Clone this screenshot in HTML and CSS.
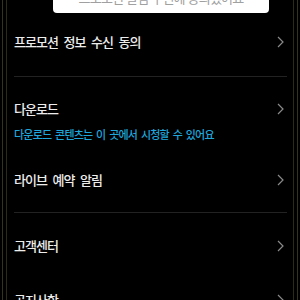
FILE: index.html
```html
<!DOCTYPE html>
<html lang="ko">
<head>
<meta charset="utf-8">
<link rel="stylesheet" href="styles.css">
</head>
<body>
<div class="frame">
  <div class="inner">
    <div class="content">
      <div class="toast"><span class="toast-text">프로모션 알림 수신에 동의했어요</span></div>

      <div class="row first">
        <span class="label">프로모션 정보 수신 동의</span>
        <svg class="chev" width="7" height="12" viewBox="0 0 7 12"><polyline points="1,1 6,6 1,11" fill="none" stroke="#8a8a8a" stroke-width="1.2"/></svg>
      </div>

      <div class="divider d1"></div>

      <div class="download">
        <div class="dl-title">
          <span class="label">다운로드</span>
          <svg class="chev" width="7" height="12" viewBox="0 0 7 12"><polyline points="1,1 6,6 1,11" fill="none" stroke="#8a8a8a" stroke-width="1.2"/></svg>
        </div>
        <div class="sub">다운로드 콘텐츠는 이 곳에서 시청할 수 있어요</div>
      </div>

      <div class="row">
        <span class="label">라이브 예약 알림</span>
        <svg class="chev" width="7" height="12" viewBox="0 0 7 12"><polyline points="1,1 6,6 1,11" fill="none" stroke="#8a8a8a" stroke-width="1.2"/></svg>
      </div>

      <div class="divider d2"></div>

      <div class="row">
        <span class="label">고객센터</span>
        <svg class="chev" width="7" height="12" viewBox="0 0 7 12"><polyline points="1,1 6,6 1,11" fill="none" stroke="#8a8a8a" stroke-width="1.2"/></svg>
      </div>

      <div class="row">
        <span class="label">공지사항</span>
        <svg class="chev" width="7" height="12" viewBox="0 0 7 12"><polyline points="1,1 6,6 1,11" fill="none" stroke="#8a8a8a" stroke-width="1.2"/></svg>
      </div>
    </div>
  </div>
</div>
</body>
</html>
```
FILE: styles.css
```css
html, body {
  margin: 0;
  padding: 0;
  background: #000;
  width: 300px;
  height: 300px;
  overflow: hidden;
}
body {
  font-family: "Noto Sans CJK KR", "Noto Sans", sans-serif;
  color: #ededed;
}
.frame {
  margin: 0 2px;
  height: 300px;
  border-left: 1px solid #34331c;
  border-right: 1px solid #34331c;
  padding: 0 3px;
}
.inner {
  height: 300px;
  border-left: 1px solid #2c2b18;
  border-right: 1px solid #2c2b18;
}
.content {
  padding: 0 6px 0 7px;
}
.toast {
  margin: 0 18px 0 39px;
  height: 13px;
  background: #fff;
  border-radius: 0 0 4px 4px;
  overflow: hidden;
  display: flex;
  justify-content: center;
}
.toast-text {
  display: block;
  margin-top: -10px;
  font-size: 13px;
  line-height: 16px;
  letter-spacing: -0.8px;
  color: #a0a0a0;
  white-space: nowrap;
}
.row, .dl-title {
  display: flex;
  align-items: center;
  justify-content: space-between;
}
.row {
  height: 54px;
}
.row.first { margin-top: 2px; }
.label {
  font-size: 13px;
  font-weight: 500;
  letter-spacing: -1px;
  word-spacing: 3px;
  line-height: 16px;
  white-space: nowrap;
}
.chev {
  margin-right: 3px;
  display: block;
}
.divider {
  height: 1px;
  background: #222;
}
.d1 { margin: 7px 0 5px; }
.d2 { margin: 5px 0 6px; }
.download {
  padding: 19px 0 12px;
}
.dl-title { height: 16px; }
.sub {
  margin-top: 10px;
  font-size: 11px;
  font-weight: 500;
  line-height: 14px;
  letter-spacing: -0.8px;
  word-spacing: 1.5px;
  color: #1ea7dd;
  white-space: nowrap;
}
```
